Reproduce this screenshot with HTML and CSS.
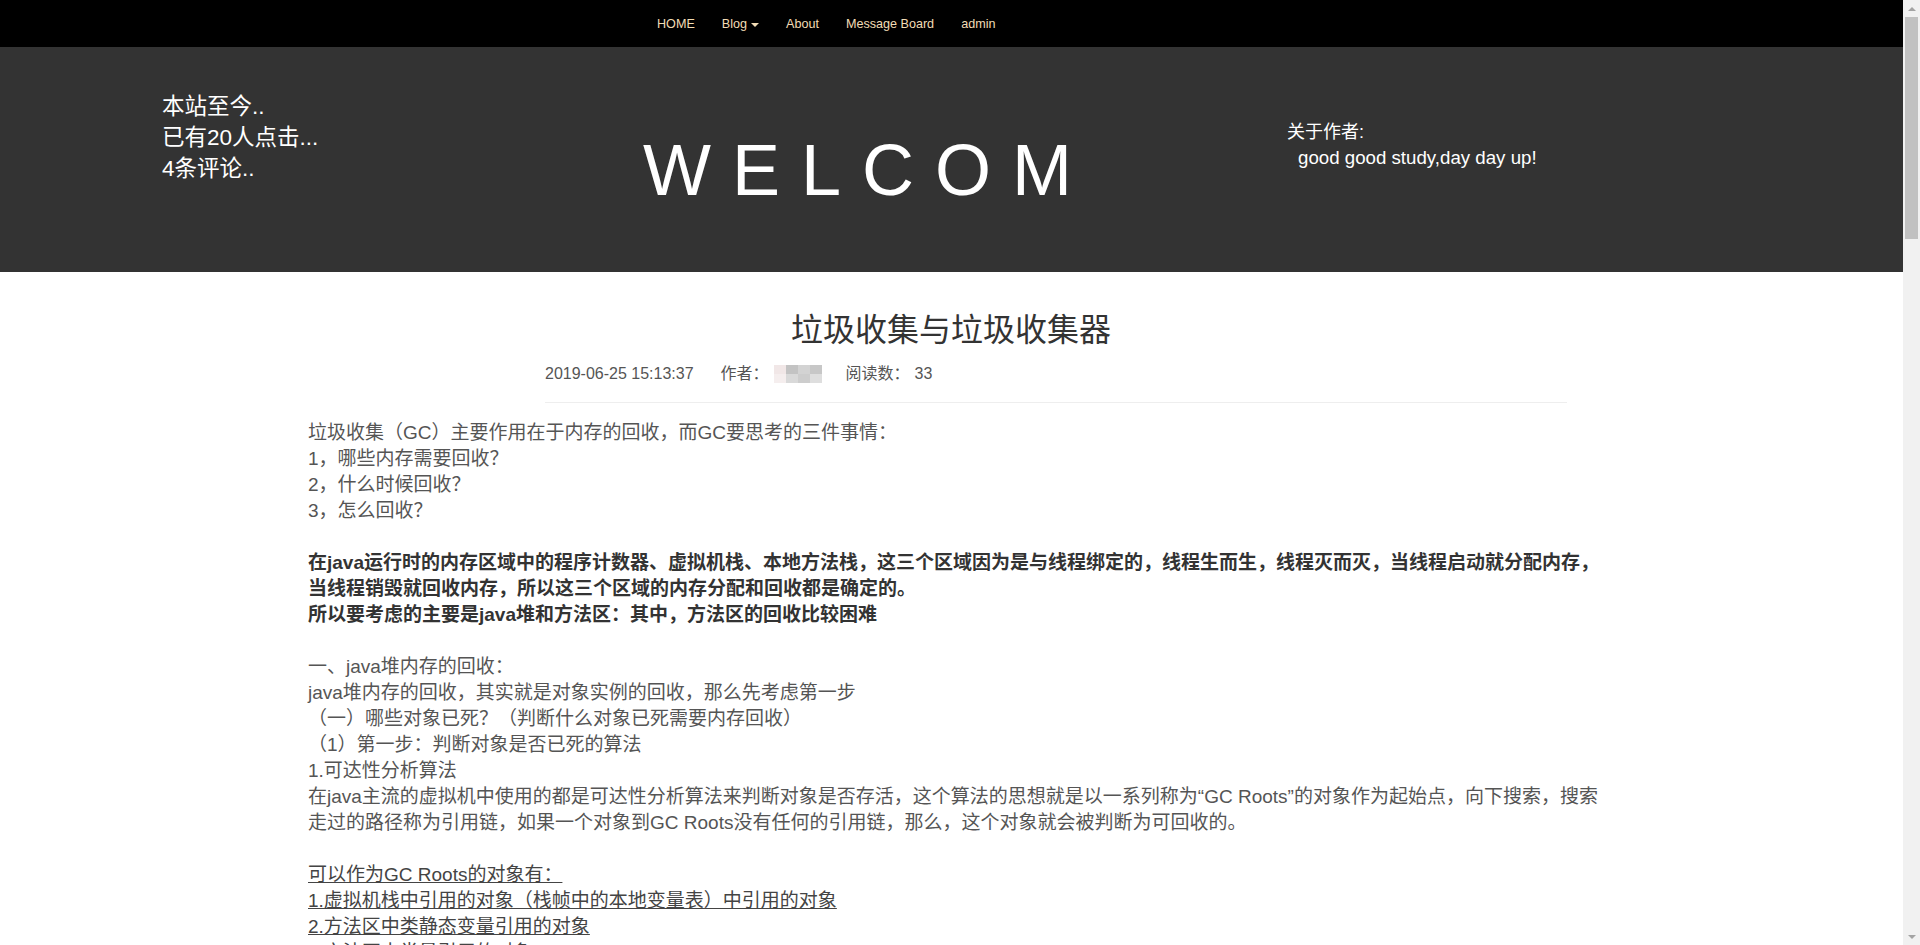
FILE: index.html
```html
<!DOCTYPE html>
<html lang="zh-CN">
<head>
<meta charset="utf-8">
<title>垃圾收集与垃圾收集器</title>
<link rel="stylesheet" href="styles.css">
</head>
<body>
<nav class="topnav">
  <ul class="menu">
    <li class="menu-item">HOME</li>
    <li class="menu-item">Blog <span class="caret"></span></li>
    <li class="menu-item">About</li>
    <li class="menu-item">Message Board</li>
    <li class="menu-item">admin</li>
  </ul>
</nav>

<header class="hero">
  <div class="stats">
    <div>本站至今..</div>
    <div>已有20人点击...</div>
    <div>4条评论..</div>
  </div>
  <div class="welcome">WELCOM</div>
  <div class="about">
    <div class="about-title">关于作者:</div>
    <div class="about-motto">good good study,day day up!</div>
  </div>
</header>

<main class="post">
  <h1 class="post-title">垃圾收集与垃圾收集器</h1>
  <div class="meta-wrap">
    <div class="meta">
      <span class="meta-date">2019-06-25 15:13:37</span>
      <span class="meta-author">作者：</span>
      <span class="mosaic">
        <i></i><i></i><i></i><i></i><i></i><i></i><i></i><i></i>
      </span>
      <span class="meta-reads">阅读数：<span class="reads-num">33</span></span>
    </div>
    <hr class="rule">
  </div>
  <div class="post-body">
    <p>垃圾收集（GC）主要作用在于内存的回收，而GC要思考的三件事情：<br>1，哪些内存需要回收？<br>2，什么时候回收？<br>3，怎么回收？<br><br></p>
    <p class="strong">在java运行时的内存区域中的程序计数器、虚拟机栈、本地方法栈，这三个区域因为是与线程绑定的，线程生而生，线程灭而灭，当线程启动就分配内存，当线程销毁就回收内存，所以这三个区域的内存分配和回收都是确定的。<br>所以要考虑的主要是java堆和方法区：其中，方法区的回收比较困难<br><br></p>
    <p>一、java堆内存的回收：<br>java堆内存的回收，其实就是对象实例的回收，那么先考虑第一步<br>（一）哪些对象已死？（判断什么对象已死需要内存回收）<br>（1）第一步：判断对象是否已死的算法<br>1.可达性分析算法<br>在java主流的虚拟机中使用的都是可达性分析算法来判断对象是否存活，这个算法的思想就是以一系列称为“GC Roots”的对象作为起始点，向下搜索，搜索走过的路径称为引用链，如果一个对象到GC Roots没有任何的引用链，那么，这个对象就会被判断为可回收的。<br><br></p>
    <p class="under"><span>可以作为GC Roots的对象有：</span><br><span>1.虚拟机栈中引用的对象（栈帧中的本地变量表）中引用的对象</span><br><span>2.方法区中类静态变量引用的对象</span><br><span>3.方法区中常量引用的对象</span><br><span>4.本地方法栈中JNI（即一般说的Native方法）引用的对象</span></p>
  </div>
</main>

<div class="scrollbar" aria-hidden="true">
  <span class="sb-arrow sb-up"></span>
  <span class="sb-thumb"></span>
  <span class="sb-fill"></span>
  <span class="sb-arrow sb-down"></span>
</div>
</body>
</html>
```

FILE: styles.css
```css
html, body {
  margin: 0;
  padding: 0;
}

body {
  font-family: "Liberation Sans", "Noto Sans CJK SC", sans-serif;
  background: #fff;
  color: #333;
}

/* ---------- fake window scrollbar (overlay) ---------- */
.scrollbar {
  position: fixed;
  top: 0;
  right: 0;
  width: 17px;
  height: 100vh;
  background: #f1f1f1;
  display: flex;
  flex-direction: column;
  align-items: center;
}

.sb-arrow {
  flex: 0 0 17px;
  width: 17px;
  display: flex;
  align-items: center;
  justify-content: center;
}

.sb-arrow::before {
  content: "";
  width: 0;
  height: 0;
  border-left: 4px solid transparent;
  border-right: 4px solid transparent;
}

.sb-up::before {
  border-bottom: 4px solid #a3a3a3;
}

.sb-down::before {
  border-top: 4px solid #a3a3a3;
}

.sb-thumb {
  flex: 0 0 222px;
  width: 13px;
  background: #c1c1c1;
}

.sb-fill {
  flex: 1 1 auto;
}

/* ---------- top navigation ---------- */
.topnav {
  background: #000;
  height: 47px;
}

.menu {
  list-style: none;
  margin: 0;
  padding: 0 0 0 657px;
  display: flex;
  gap: 27px;
  height: 47px;
  align-items: center;
}

.menu-item {
  color: #f2dcb5;
  font-size: 12.6px;
  line-height: 18px;
  display: flex;
  align-items: center;
}

.caret {
  display: inline-block;
  width: 0;
  height: 0;
  margin-left: 4px;
  margin-top: 2px;
  border-top: 4px solid #f2dcb5;
  border-left: 4px solid transparent;
  border-right: 4px solid transparent;
}

/* ---------- hero ---------- */
.hero {
  background: #333;
  height: 225px;
  padding-left: 162px;
  display: grid;
  grid-template-columns: 481px 644px 1fr;
  align-items: start;
  color: #fff;
}

.stats {
  margin-top: 44px;
  font-size: 22.5px;
  line-height: 31px;
}

.welcome {
  margin-top: 87px;
  font-size: 72px;
  line-height: 72px;
  letter-spacing: 21px;
}

.about {
  margin-top: 72px;
  line-height: 26px;
}

.about-title {
  font-size: 18px;
}

.about-motto {
  font-size: 18.7px;
  padding-left: 11px;
}

/* ---------- post ---------- */
.post {
  width: 1286px;
  margin-left: 308px;
  padding-top: 36px;
  min-height: 3600px;
}

.post-title {
  margin: 0;
  text-align: center;
  font-size: 32px;
  line-height: 44px;
  font-weight: normal;
  color: #333;
}

.meta-wrap {
  margin-left: 237px;
  width: 1022px;
}

.meta {
  margin-top: 11px;
  display: flex;
  align-items: center;
  font-size: 16px;
  line-height: 22px;
  color: #555;
}

.meta-author {
  margin-left: 27px;
}

.mosaic {
  margin-left: 5px;
  width: 48px;
  height: 18px;
  display: grid;
  grid-template-columns: repeat(4, 12px);
  grid-template-rows: repeat(2, 9px);
  filter: blur(0.6px);
}

.mosaic i:nth-child(1) { background: #f1e7e7; }
.mosaic i:nth-child(2) { background: #c3c3c3; }
.mosaic i:nth-child(3) { background: #d3d3d3; }
.mosaic i:nth-child(4) { background: #c7c7c7; }
.mosaic i:nth-child(5) { background: #f5eeee; }
.mosaic i:nth-child(6) { background: #d9d9d9; }
.mosaic i:nth-child(7) { background: #cdcdcd; }
.mosaic i:nth-child(8) { background: #dedede; }

.meta-reads {
  margin-left: 24px;
}

.reads-num {
  margin-left: 5px;
}

.rule {
  margin: 17px 0 0 0;
  border: 0;
  border-top: 1px solid #eee;
  height: 0;
}

.post-body {
  margin-top: 17px;
  margin-right: -14px;
  font-size: 19px;
  line-height: 26px;
  color: #555;
}

.post-body p {
  margin: 0;
}

.post-body .strong {
  font-weight: bold;
  color: #333;
}

.post-body .under span {
  text-decoration: underline;
  color: #444;
}
```
